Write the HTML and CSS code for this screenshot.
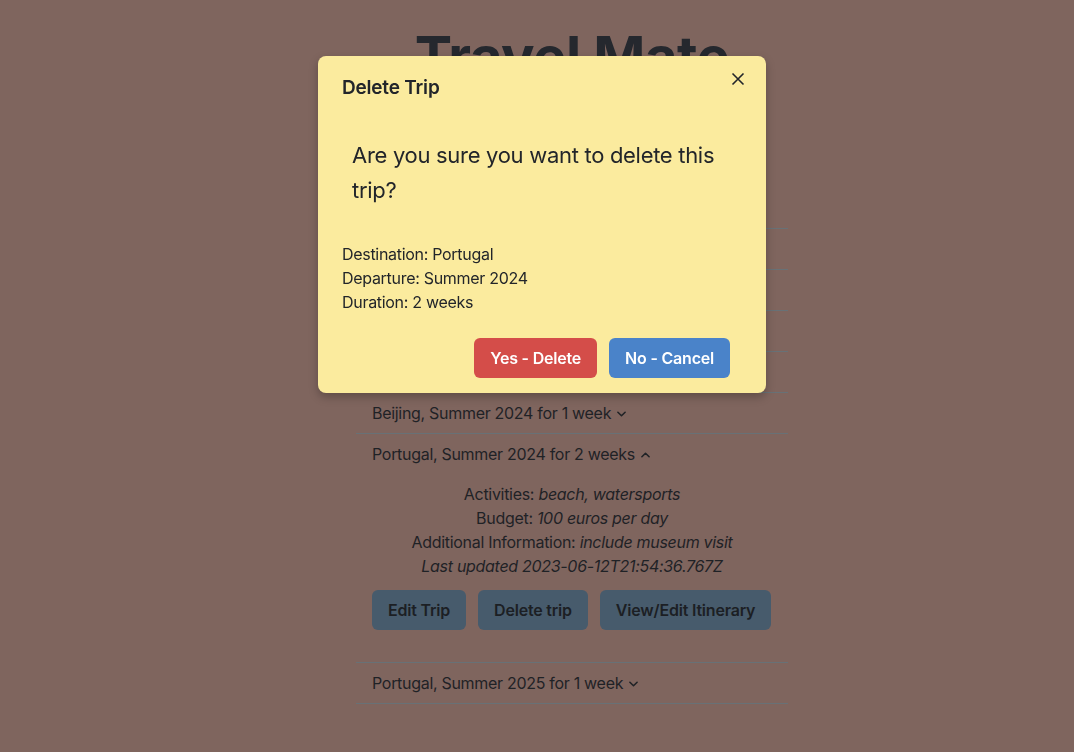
FILE: index.html
```html
<!DOCTYPE html>
<html lang="en">
<head>
<meta charset="utf-8">
<title>Travel Mate</title>
<link rel="stylesheet" href="styles.css">
</head>
<body>
<main class="page">
  <h1 class="title">Travel Mate</h1>
  <ul class="trips">
    <li class="trip"><div class="trip-head">Paris, Spring 2024 for 1 week <svg class="chev" viewBox="0 0 10 6"><path d="M1 1l4 4 4-4"/></svg></div></li>
    <li class="trip"><div class="trip-head">Tokyo, Spring 2024 for 2 weeks <svg class="chev" viewBox="0 0 10 6"><path d="M1 1l4 4 4-4"/></svg></div></li>
    <li class="trip"><div class="trip-head">Rome, Summer 2024 for 1 week <svg class="chev" viewBox="0 0 10 6"><path d="M1 1l4 4 4-4"/></svg></div></li>
    <li class="trip"><div class="trip-head">Berlin, Summer 2024 for 3 days <svg class="chev" viewBox="0 0 10 6"><path d="M1 1l4 4 4-4"/></svg></div></li>
    <li class="trip"><div class="trip-head">Beijing, Summer 2024 for 1 week <svg class="chev" viewBox="0 0 10 6"><path d="M1 1l4 4 4-4"/></svg></div></li>
    <li class="trip trip-open">
      <div class="trip-head">Portugal, Summer 2024 for 2 weeks <svg class="chev" viewBox="0 0 10 6"><path d="M1 5l4-4 4 4"/></svg></div>
      <div class="trip-body">
        <p>Activities: <em>beach, watersports</em></p>
        <p>Budget: <em>100 euros per day</em></p>
        <p>Additional Information: <em>include museum visit</em></p>
        <p><em>Last updated 2023-06-12T21:54:36.767Z</em></p>
        <div class="trip-actions">
          <button class="btn btn-muted">Edit Trip</button>
          <button class="btn btn-muted">Delete trip</button>
          <button class="btn btn-muted">View/Edit Itinerary</button>
        </div>
      </div>
    </li>
    <li class="trip"><div class="trip-head">Portugal, Summer 2025 for 1 week <svg class="chev" viewBox="0 0 10 6"><path d="M1 1l4 4 4-4"/></svg></div></li>
  </ul>
</main>

<div class="backdrop"></div>
<div class="modal" role="dialog">
  <div class="modal-header">
    <h2 class="modal-title">Delete Trip</h2>
    <button class="close" aria-label="Close"><svg viewBox="0 0 14 14"><path d="M1.5 1.5l11 11M12.5 1.5l-11 11"/></svg></button>
  </div>
  <div class="modal-body">
    <p class="question">Are you sure you want to delete this trip?</p>
    <p class="detail">Destination: Portugal</p>
    <p class="detail">Departure: Summer 2024</p>
    <p class="detail">Duration: 2 weeks</p>
  </div>
  <div class="modal-footer">
    <button class="btn btn-danger">Yes - Delete</button>
    <button class="btn btn-primary">No - Cancel</button>
  </div>
</div>
</body>
</html>
```

FILE: styles.css
```css
* { box-sizing: border-box; }

html, body {
  margin: 0;
  padding: 0;
}

body {
  background: #7f655e;
  color: #1f2226;
  font-family: Inter, "Noto Sans", sans-serif;
  font-size: 16px;
  line-height: 24px;
  letter-spacing: -0.3px;
  min-height: 752px;
}

.page {
  width: 432px;
  margin-left: calc(50% - 181px);
  padding-top: 24px;
}

.title {
  margin: 0 0 137px;
  font-size: 56px;
  line-height: 67px;
  font-weight: 700;
  color: #25282e;
  text-align: center;
  letter-spacing: -0.5px;
}

.trips {
  list-style: none;
  margin: 0;
  padding: 0;
  border-top: 1px solid #687176;
}

.trip {
  border-bottom: 1px solid #687176;
}

.trip-head {
  padding: 8px 16px;
  height: 40px;
  display: flex;
  align-items: center;
  gap: 6px;
  white-space: nowrap;
}

.chev {
  width: 9px;
  height: 6px;
  fill: none;
  stroke: #1f2226;
  stroke-width: 1.7;
  stroke-linecap: round;
  stroke-linejoin: round;
  margin-top: 1px;
}

.trip-body {
  padding: 8px 16px 32px;
  text-align: center;
}

.trip-body p { margin: 0; }

.trip-actions {
  display: flex;
  gap: 12px;
  margin-top: 12px;
}

.btn {
  font-family: inherit;
  font-size: 16px;
  font-weight: 600;
  line-height: 24px;
  letter-spacing: -0.2px;
  height: 40px;
  padding: 0 16px;
  border: none;
  border-radius: 6px;
  white-space: nowrap;
  cursor: pointer;
}

.btn-muted {
  background: #475b6c;
  color: #1c1f24;
}

.btn-danger {
  background: #d44d49;
  color: #ffffff;
}

.btn-primary {
  background: #4a83c9;
  color: #ffffff;
}

.backdrop {
  position: fixed;
  inset: 0;
  background: transparent;
}

.modal {
  position: fixed;
  top: 56px;
  left: calc(50% - 219px);
  width: 448px;
  background: #fbeb9e;
  border-radius: 8px;
  box-shadow: 0 4px 10px rgba(0, 0, 0, 0.25);
  color: #22252a;
}

.modal-header {
  display: flex;
  align-items: center;
  justify-content: space-between;
  padding: 19px 20px 0 24px;
}

.modal-title {
  margin: 0;
  font-size: 19px;
  line-height: 24px;
  font-weight: 600;
  letter-spacing: -0.2px;
  transform: translateY(1px);
}

.close {
  background: none;
  border: none;
  padding: 0;
  width: 16px;
  height: 16px;
  margin-top: -14px;
  cursor: pointer;
}

.close svg {
  width: 14px;
  height: 14px;
  fill: none;
  stroke: #22252a;
  stroke-width: 1.6;
}

.modal-body {
  padding: 39px 24px 0;
}

.question {
  margin: 0 0 34px;
  padding: 0 10px;
  font-size: 22px;
  line-height: 35px;
  letter-spacing: -0.3px;
}

.detail {
  margin: 0;
}

.modal-footer {
  display: flex;
  justify-content: flex-end;
  gap: 12px;
  padding: 24px 36px 15px 24px;
}
```
